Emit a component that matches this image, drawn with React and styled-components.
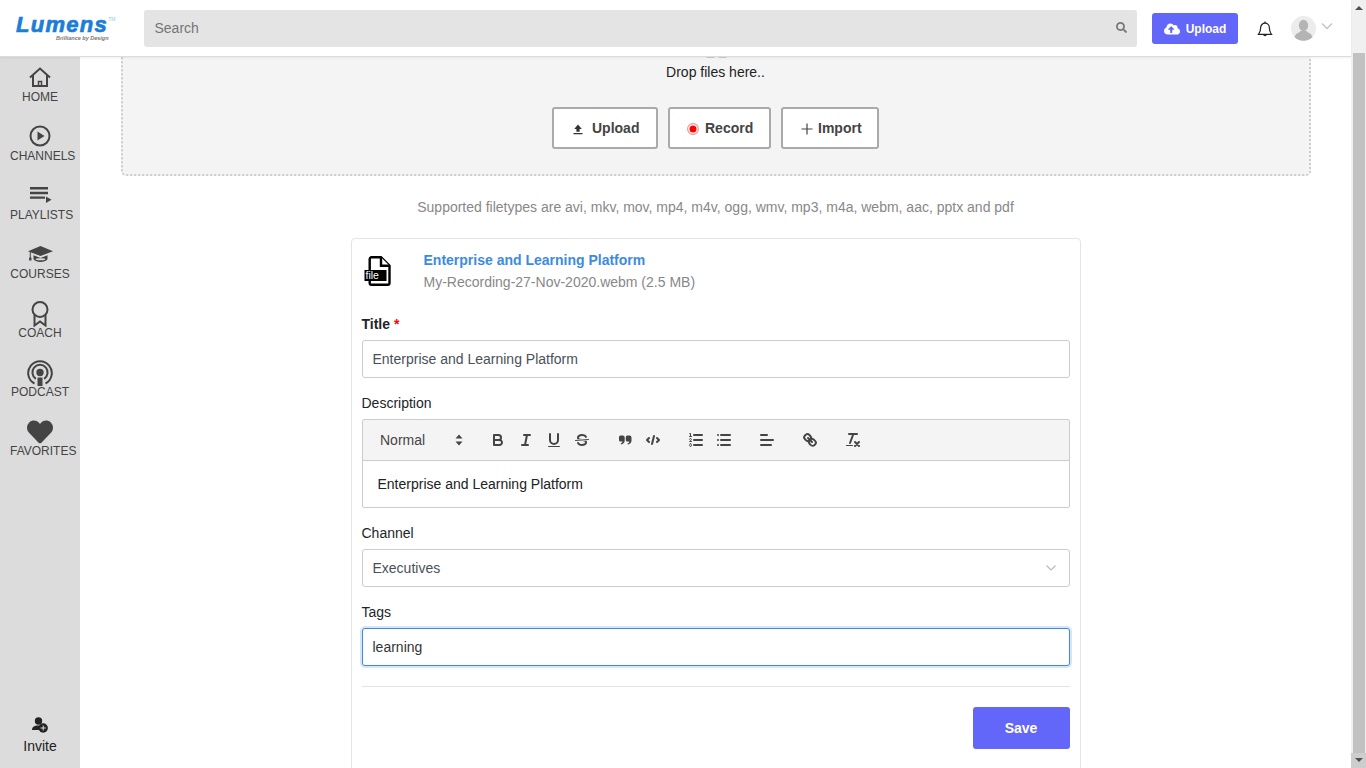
import React from 'react'
import styled, { createGlobalStyle } from 'styled-components'
import { FaSearch, FaCloudUploadAlt, FaHeart } from 'react-icons/fa'

const GlobalStyle = createGlobalStyle`
  html, body {
    margin: 0;
    height: 100%;
    overflow: hidden;
    background: #fff;
    font-family: "Liberation Sans", Arial, sans-serif;
    font-size: 14px;
  }
  * { box-sizing: border-box; }
`

const Page = styled.div`
  display: flex;
  height: 768px;
  overflow: hidden;
`

const Main = styled.div`
  flex: 1;
  min-width: 0;
  display: flex;
  flex-direction: column;
`

const TopBar = styled.header`
  position: relative;
  z-index: 2;
  flex: none;
  height: 57px;
  display: flex;
  align-items: center;
  background: #fff;
  border-bottom: 1px solid #dcdcdc;
  box-shadow: 0 1px 2px rgba(0, 0, 0, 0.06);
`

const Logo = styled.div`
  flex: none;
  width: 144px;
  padding-left: 16px;
  display: flex;
  flex-direction: column;
`

const LogoMark = styled.div`
  display: flex;
  height: 20px;
  line-height: 20px;
  font-size: 22px;
  letter-spacing: 1.3px;
  font-weight: bold;
  font-style: italic;
  color: #1b7ed6;
  -webkit-text-stroke: 0.7px #1b7ed6;

  sup {
    font-size: 5px;
    letter-spacing: 0;
    font-weight: normal;
    font-style: normal;
    line-height: 8px;
    color: #9cc4e8;
    -webkit-text-stroke: 0;
  }
`

const LogoTag = styled.div`
  margin-left: 40px;
  font-size: 5.5px;
  line-height: 6px;
  font-weight: bold;
  font-style: italic;
  white-space: nowrap;
  color: #777;
`

const SearchBox = styled.div`
  flex: 1;
  height: 37px;
  margin-top: 1px;
  display: flex;
  align-items: center;
  justify-content: space-between;
  padding: 0 10px 2px 10.5px;
  background: #e4e4e4;
  border-radius: 3px;
  color: #757575;

  svg { width: 11px; height: 11px; color: #777; }
`

const TopUpload = styled.button`
  flex: none;
  width: 86px;
  height: 31px;
  margin: 1px 0 0 15px;
  display: flex;
  align-items: center;
  justify-content: center;
  gap: 6px;
  border: 0;
  border-radius: 3px;
  background: #6266f9;
  color: #fff;
  font: bold 12px "Liberation Sans", Arial, sans-serif;

  svg { width: 16px; height: 16px; }
`

const Bell = styled.svg`
  flex: none;
  display: block;
  width: 16px;
  height: 16px;
  margin: 1px 0 0 18.5px;
  fill: none;
  stroke: #222;
  stroke-width: 1.2;
`

const UserMenu = styled.div`
  flex: none;
  display: flex;
  align-items: center;
  margin-left: 18.5px;
  width: 60px;
  gap: 5px;
`

const Avatar = styled.svg`
  width: 25px;
  height: 25px;
  display: block;
`

const Chevron = styled.svg`
  width: 12px;
  height: 8px;
  margin-top: -5px;
  fill: none;
  stroke: #c4c4c4;
  stroke-width: 1.4;
`

const Body = styled.div`
  flex: 1;
  min-height: 0;
  display: flex;
`

const Sidebar = styled.nav`
  flex: none;
  width: 80px;
  display: flex;
  flex-direction: column;
  background: #dcdcdc;
  padding-top: 8px;
`

const NavItem = styled.a`
  width: 60px;
  height: 59px;
  margin-left: 10px;
  display: flex;
  flex-direction: column;
  font-size: 12px;
  line-height: 14px;
  color: #444;
  white-space: nowrap;
  text-align: center;
`

const NavIcon = styled.div`
  height: 24px;
  display: flex;
  justify-content: center;
  align-items: center;
  color: #444;

  svg { display: block; }
`

const NavLabel = styled.div`
  margin-top: 1px;
`

const Invite = styled.a`
  margin-top: auto;
  height: 51px;
  display: flex;
  flex-direction: column;
  align-items: center;
  color: #222;
  font-size: 14px;
  line-height: 16px;

  svg { display: block; margin-bottom: 5px; }
`

const Content = styled.main`
  flex: 1;
  min-width: 0;
  overflow: hidden;
  padding: 0 40.5px;
`

const DropZone = styled.section`
  height: 200px;
  margin-top: -81px;
  padding-top: 60px;
  display: flex;
  flex-direction: column;
  align-items: center;
  background: #f4f4f4;
  border: 2px dotted #ccc;
  border-radius: 5px;
`

const DropIcon = styled.svg`
  flex: none;
  display: block;
  width: 30px;
  height: 20px;
  fill: #ccc;
`

const DropText = styled.div`
  margin-top: 4px;
  line-height: 20px;
  color: #222;
`

const DropActions = styled.div`
  margin-top: 25px;
  display: flex;
  gap: 10px;
`

const ActionButton = styled.button`
  width: ${p => p.$width}px;
  height: 42px;
  padding: 0 16px;
  display: flex;
  align-items: center;
  white-space: nowrap;
  background: #fff;
  border: 2px solid #aaa;
  border-radius: 3px;
  color: #444;
  font: bold 14px "Liberation Sans", Arial, sans-serif;
`

const ActionIcon = styled.svg`
  display: block;
  flex: none;
  width: 12px;
  height: 12px;
  margin: 2px ${p => p.$gap}px 0 ${p => p.$lead}px;
`

const Hint = styled.p`
  margin: 23px 0 23px;
  line-height: 16px;
  text-align: center;
  color: #888;
`

const Card = styled.section`
  width: 730px;
  height: 620px;
  margin: 0 auto;
  padding: 10px;
  background: #fff;
  border: 1px solid #e4e4e4;
  border-radius: 4px;
`

const FileRow = styled.div`
  display: flex;
  height: 67px;
`

const FileIcon = styled.svg`
  flex: none;
  display: block;
  width: 30px;
  height: 34px;
  margin: 5px 32px 0 0;
`

const FileName = styled.div`
  margin-top: 3px;
  line-height: 16px;
  font-weight: bold;
  color: #3d8bdf;
`

const FileMeta = styled.div`
  margin-top: 6px;
  line-height: 16px;
  color: #888;
`

const Label = styled.label`
  display: block;
  margin-top: ${p => p.$top || 0}px;
  margin-bottom: 8px;
  line-height: 16px;
  color: #212529;
  font-weight: ${p => (p.$bold ? 'bold' : 'normal')};

  span { color: #f00; }
`

const Field = styled.div`
  height: 38px;
  padding: 0 10px;
  display: flex;
  align-items: center;
  justify-content: space-between;
  background: #fff;
  border: 1px solid ${p => (p.$focused ? '#3d8bdf' : '#ccc')};
  border-radius: 3px;
  color: ${p => (p.$focused ? '#333' : '#495057')};
  box-shadow: ${p => (p.$focused ? '0 0 0 2px #d6e6f7' : 'none')};
`

const SelectChevron = styled.svg`
  width: 12px;
  height: 8px;
  margin-right: 2px;
  fill: none;
  stroke: #bbb;
  stroke-width: 1.2;
`

const Editor = styled.div`
  border: 1px solid #ccc;
  border-radius: 2px;
`

const Toolbar = styled.div`
  height: 41px;
  padding: 0 8px;
  display: flex;
  align-items: center;
  gap: 15px;
  background: #f4f4f4;
  border-bottom: 1px solid #ccc;
`

const Picker = styled.div`
  width: 98px;
  padding: 0 6px 0 9.5px;
  display: flex;
  align-items: center;
  justify-content: space-between;
  color: #444;

  svg { display: block; }
`

const ToolGroup = styled.div`
  display: flex;
`

const Tool = styled.svg`
  display: block;
  box-sizing: content-box;
  width: 18px;
  height: 18px;
  padding: 3px 5px;
  fill: none;
  stroke: #444;
  stroke-width: 2;
  stroke-linecap: round;
  stroke-linejoin: round;

  .thin { stroke-width: 1; }
  .solid { fill: #444; stroke: none; }
`

const EditorBody = styled.div`
  height: 46px;
  padding: 14px 15px;
  line-height: 18px;
  color: #222;
`

const Divider = styled.hr`
  margin: 20px 0;
  border: 0;
  border-top: 1px solid #e5e5e5;
`

const FormActions = styled.div`
  display: flex;
  justify-content: flex-end;
`

const SaveButton = styled.button`
  width: 97px;
  height: 42px;
  border: 0;
  border-radius: 3px;
  background: #6266f9;
  color: #fff;
  font: bold 14px "Liberation Sans", Arial, sans-serif;
`

const ScrollBar = styled.div`
  flex: none;
  width: 15px;
  display: flex;
  flex-direction: column;
  background: #f0f0f0;
`

const ScrollEnd = styled.div`
  flex: none;
  height: ${p => p.$height}px;
  padding-top: ${p => p.$pad}px;
  display: flex;
  justify-content: center;
  background: ${p => p.$bg || 'transparent'};

  svg { display: block; width: 8px; height: 4px; fill: #505050; }
`

const ScrollThumb = styled.div`
  flex: 1;
  margin: 0 1px 0 2px;
  background: #c1c1c1;
`

const navItems = [
  {
    label: 'HOME',
    icon: (
      <svg width="22" height="20" viewBox="0 0 22 20" fill="none" stroke="#444" strokeWidth="2">
        <path d="M1 10.500 11 1.500l10 9" />
        <path d="M4 8v11h14V8" />
        <path d="M9.500 19v-4.500h3V19" strokeWidth="1.500" />
      </svg>
    ),
  },
  {
    label: 'CHANNELS',
    icon: (
      <svg width="22" height="22" viewBox="0 0 22 22">
        <circle cx="11" cy="11" r="9.500" fill="none" stroke="#444" strokeWidth="2" />
        <path d="M8.500 6.500 15.500 11l-7 4.500z" fill="#444" />
      </svg>
    ),
  },
  {
    label: 'PLAYLISTS',
    icon: (
      <svg width="22" height="16" viewBox="0 0 22 16" fill="#444" style={{ marginLeft: 1 }}>
        <path d="M0 0h18v2.500H0zM0 4.800h18v2.500H0zM0 9.400h15v2.300H0z" />
        <path d="M16 9.500 21.500 12.700 16 16z" />
      </svg>
    ),
  },
  {
    label: 'COURSES',
    icon: (
      <svg width="25" height="16" viewBox="0 0 25 16" fill="#444">
        <path d="M12.500 0 25 5.200 12.500 10 0 5.200z" />
        <path d="M5.500 9.300 12.500 12l7-2.700v4c-1.500 1.800-4 2.700-7 2.700s-5.500-.9-7-2.700z" />
        <ellipse cx="12.500" cy="13.300" rx="4.800" ry="1" fill="#dcdcdc" />
        <path d="M1.800 6h1v5.500h.7v3H1.100v-3h.7z" />
      </svg>
    ),
  },
  {
    label: 'COACH',
    icon: (
      <svg width="18" height="26" viewBox="0 0 18 26" fill="none" stroke="#444" strokeWidth="2" style={{ marginTop: 2 }}>
        <circle cx="9" cy="8.500" r="7.500" />
        <path d="M3.500 14v10.500L9 20.500l5.500 4V14" />
      </svg>
    ),
  },
  {
    label: 'PODCAST',
    icon: (
      <svg width="26" height="26" viewBox="0 0 26 26" fill="none" stroke="#444" strokeWidth="2" style={{ marginTop: 1 }}>
        <path d="M7.500 23.500a11.800 11.800 0 1 1 11 0" />
        <path d="M8.800 18.800a7.600 7.600 0 1 1 8.400 0" />
        <circle cx="13" cy="12.500" r="3.700" fill="#444" stroke="none" />
        <path d="M10.500 17.500h5V26h-5z" fill="#444" stroke="none" />
      </svg>
    ),
  },
  { label: 'FAVORITES', icon: <FaHeart size={26} style={{ marginTop: 2 }} /> },
]

const App = () => (
  <Page>
    <GlobalStyle />
    <Main>
      <TopBar>
        <Logo>
          <LogoMark>Lumens<sup>TM</sup></LogoMark>
          <LogoTag>Brilliance by Design</LogoTag>
        </Logo>
        <SearchBox>
          Search
          <FaSearch />
        </SearchBox>
        <TopUpload>
          <FaCloudUploadAlt />
          Upload
        </TopUpload>
        <Bell viewBox="0 0 16 16">
          <path d="M8 2.200a4.300 4.300 0 0 0-4.300 4.300c0 3.800-1 5.300-2.200 6.800h13c-1.200-1.500-2.200-3-2.200-6.800A4.300 4.300 0 0 0 8 2.200z" />
          <path d="M8 .5v1.700" />
          <path d="M6.500 13.500a1.600 1.600 0 0 0 3 0" />
        </Bell>
        <UserMenu>
          <Avatar viewBox="0 0 25 25">
            <circle cx="12.500" cy="12.500" r="12.500" fill="#ececec" />
            <ellipse cx="12.500" cy="9.500" rx="4.600" ry="5.800" fill="#b4b4b4" />
            <path d="M3.500 21c1-4 5-4 6-6h6c1 2 5 2 6 6a12.500 12.500 0 0 1-18 0z" fill="#b4b4b4" />
          </Avatar>
          <Chevron viewBox="0 0 12 8"><path d="M1 1.500 6 6.500l5-5" /></Chevron>
        </UserMenu>
      </TopBar>
      <Body>
        <Sidebar>
          {navItems.map(item => (
            <NavItem key={item.label}>
              <NavIcon>{item.icon}</NavIcon>
              <NavLabel>{item.label}</NavLabel>
            </NavItem>
          ))}
          <Invite>
            <svg width="16" height="16" viewBox="0 0 16 16" fill="#222">
              <circle cx="6.500" cy="4" r="3.700" />
              <path d="M0 12.500c0-2.500 2.500-3.500 4.500-4h3.500v4.500H0z" />
              <circle cx="11.200" cy="11" r="4.700" />
              <path d="M10.700 8.400h1v2.100h2.100v1h-2.100v2.100h-1v-2.100H8.600v-1h2.100z" fill="#dcdcdc" />
            </svg>
            Invite
          </Invite>
        </Sidebar>
        <Content>
          <DropZone>
            <DropIcon viewBox="0 0 30 20">
              <rect x="5.500" y="18" width="8" height="2" rx="1" />
              <rect x="17.500" y="18" width="8" height="2" rx="1" />
            </DropIcon>
            <DropText>Drop files here..</DropText>
            <DropActions>
              <ActionButton $width={106}>
                <ActionIcon $gap={8} $lead={2} viewBox="0 0 12 12" fill="#333">
                  <path d="M6 1.500 9.800 6H7.600v2.800H4.400V6H2.200zM1.500 10h9v1.200h-9z" />
                </ActionIcon>
                Upload
              </ActionButton>
              <ActionButton $width={103}>
                <ActionIcon $gap={6} $lead={1} viewBox="0 0 12 12">
                  <circle cx="6" cy="6" r="5.400" fill="#fff" stroke="#ff8a8a" strokeWidth="1.100" />
                  <circle cx="6" cy="6" r="3.500" fill="#f00" />
                </ActionIcon>
                Record
              </ActionButton>
              <ActionButton $width={98}>
                <ActionIcon $gap={5} $lead={2} viewBox="0 0 12 12" stroke="#444" strokeWidth="1.200">
                  <path d="M6 .5v11M.5 6h11" />
                </ActionIcon>
                Import
              </ActionButton>
            </DropActions>
          </DropZone>
          <Hint>Supported filetypes are avi, mkv, mov, mp4, m4v, ogg, wmv, mp3, m4a, webm, aac, pptx and pdf</Hint>
          <Card>
            <FileRow>
              <FileIcon viewBox="0 0 30 34">
                <path d="M9.500 3.200H19l8.500 8.500v17.300a1.800 1.800 0 0 1-1.800 1.800H9.500A1.800 1.800 0 0 1 7.700 29V5a1.800 1.800 0 0 1 1.800-1.800z" fill="#fff" stroke="#000" strokeWidth="2.400" />
                <path d="M19 3.200v8.500h8.500" fill="#fff" stroke="#000" strokeWidth="2.400" />
                <rect x="2.500" y="16" width="22" height="11" fill="#000" />
                <text x="3.500" y="25" fontFamily="Liberation Sans, Arial, sans-serif" fontSize="10.500" fill="#fff">file</text>
              </FileIcon>
              <div>
                <FileName>Enterprise and Learning Platform</FileName>
                <FileMeta>My-Recording-27-Nov-2020.webm (2.5 MB)</FileMeta>
              </div>
            </FileRow>
            <Label $bold>Title <span>*</span></Label>
            <Field>Enterprise and Learning Platform</Field>
            <Label $top={17}>Description</Label>
            <Editor>
              <Toolbar>
                <Picker>
                  Normal
                  <svg width="8" height="12" viewBox="0 0 8 12" fill="#444">
                    <path d="M4 0.500 7.500 4.500h-7zM4 11.500 0.500 7.500h7z" />
                  </svg>
                </Picker>
                <ToolGroup>
                  <Tool viewBox="0 0 18 18">
                    <path d="M5 4h4.500A2.500 2.500 0 0 1 12 6.500 2.500 2.500 0 0 1 9.500 9H5z" />
                    <path d="M5 9h5.500a2.500 2.500 0 0 1 2.500 2.500 2.500 2.500 0 0 1-2.500 2.500H5z" />
                  </Tool>
                  <Tool viewBox="0 0 18 18">
                    <path d="M7 4h6M5 14h6M8 14l2-10" />
                  </Tool>
                  <Tool viewBox="0 0 18 18">
                    <path d="M5 3v6a4 4 0 0 0 4 4 4 4 0 0 0 4-4V3" />
                    <rect className="solid" height="1" rx=".5" width="12" x="3" y="15" />
                  </Tool>
                  <Tool viewBox="0 0 18 18">
                    <path className="thin" d="M15.500 8.500 2.500 9.500" />
                    <path className="solid" d="M9 8C6.500 7.800 6 7.500 6 6.500 6 5.800 7.300 5 9 5c1.600 0 2.800.7 3 1.300a1 1 0 0 0 1.900-.6C13.400 4.100 11.400 3 9 3 6.200 3 4 4.500 4 6.500a3.200 3.200 0 0 0 .5 1.800z" />
                    <path className="solid" d="M9 10c2.500.2 3 .5 3 1.500 0 .7-1.300 1.500-3 1.500-1.600 0-2.800-.7-3-1.300a1 1 0 1 0-1.900.6C4.600 13.900 6.600 15 9 15c2.800 0 5-1.500 5-3.500a3.200 3.200 0 0 0-.5-1.800z" />
                  </Tool>
                </ToolGroup>
                <ToolGroup>
                  <Tool viewBox="0 0 18 18">
                    <path className="solid" d="M4.500 4.500h2.200a2 2 0 0 1 2 2v3c0 2-1.300 3.600-3.500 4.100l-.6-1.200c1.100-.4 1.800-1.100 1.900-2H4.500a1.500 1.500 0 0 1-1.500-1.500V6a1.500 1.500 0 0 1 1.500-1.500z" />
                    <path className="solid" d="M11.300 4.500h2.200a2 2 0 0 1 2 2v3c0 2-1.300 3.600-3.500 4.100l-.6-1.200c1.100-.4 1.800-1.100 1.900-2h-2a1.500 1.500 0 0 1-1.500-1.500V6a1.500 1.500 0 0 1 1.500-1.500z" />
                  </Tool>
                  <Tool viewBox="0 0 18 18">
                    <path d="M5 7 3 9l2 2M13 7l2 2-2 2M10 5 8 13" />
                  </Tool>
                </ToolGroup>
                <ToolGroup>
                  <Tool viewBox="0 0 18 18">
                    <path d="M7 4h8M7 9h8M7 14h8" />
                    <path className="thin" d="M2.500 5.500h2" />
                    <path className="solid" d="M3.500 6A.5.5 0 0 1 3 5.500V3.100l-.3.100A.5.5 0 0 1 2.100 3c-.1-.2 0-.3.2-.4l1-.5A.5.5 0 0 1 4 2.500v3a.5.5 0 0 1-.5.5z" />
                    <path className="thin" d="M4.500 10.500h-2c0-.2 1.900-1.100 1.900-2.200a1 1 0 0 0-1.900-.1" />
                    <path className="thin" d="M2.500 14.800a1 1 0 0 0 1.900-.1.700.7 0 0 0-.6-.7.700.7 0 0 0 .6-.7 1 1 0 0 0-1.900-.1" />
                  </Tool>
                  <Tool viewBox="0 0 18 18">
                    <path d="M6 4h9M6 9h9M6 14h9M3 4h0M3 9h0M3 14h0" />
                  </Tool>
                </ToolGroup>
                <ToolGroup>
                  <Tool viewBox="0 0 18 18">
                    <path d="M3 9h12M3 14h10M3 4h6" />
                  </Tool>
                </ToolGroup>
                <ToolGroup>
                  <Tool viewBox="0 0 18 18">
                    <path d="M7 7l4 4" />
                    <path d="M8.900 4.600a3.500 3.500 0 0 1 .4 4.700 3.500 3.500 0 0 1-4.700-.4C3.200 7.500 2 6.400 4.200 4.200S7.500 3.200 8.900 4.600z" />
                    <path d="M13.400 9.100a3.500 3.500 0 0 0-4.700-.4 3.500 3.500 0 0 0 .4 4.700c1.400 1.400 2.500 2.500 4.700.4s1-3.300-.4-4.700z" />
                  </Tool>
                </ToolGroup>
                <ToolGroup>
                  <Tool viewBox="0 0 18 18">
                    <path d="M5 3h8M6 12 9.350 3M11 11l4 4M15 11l-4 4" />
                    <rect className="solid" height="1" rx=".5" width="7" x="2" y="14" />
                  </Tool>
                </ToolGroup>
              </Toolbar>
              <EditorBody>Enterprise and Learning Platform</EditorBody>
            </Editor>
            <Label $top={17}>Channel</Label>
            <Field>
              Executives
              <SelectChevron viewBox="0 0 12 8"><path d="M1.500 1.500 6 6l4.500-4.500" /></SelectChevron>
            </Field>
            <Label $top={17}>Tags</Label>
            <Field $focused>learning</Field>
            <Divider />
            <FormActions>
              <SaveButton>Save</SaveButton>
            </FormActions>
          </Card>
        </Content>
      </Body>
    </Main>
    <ScrollBar>
      <ScrollEnd $height={53} $pad={6}>
        <svg viewBox="0 0 8 4"><path d="M4 0 8 4H0z" /></svg>
      </ScrollEnd>
      <ScrollThumb />
      <ScrollEnd $height={15} $pad={5} $bg="#cdcdcd">
        <svg viewBox="0 0 8 4"><path d="M0 0h8L4 4z" /></svg>
      </ScrollEnd>
    </ScrollBar>
  </Page>
)

export default App
